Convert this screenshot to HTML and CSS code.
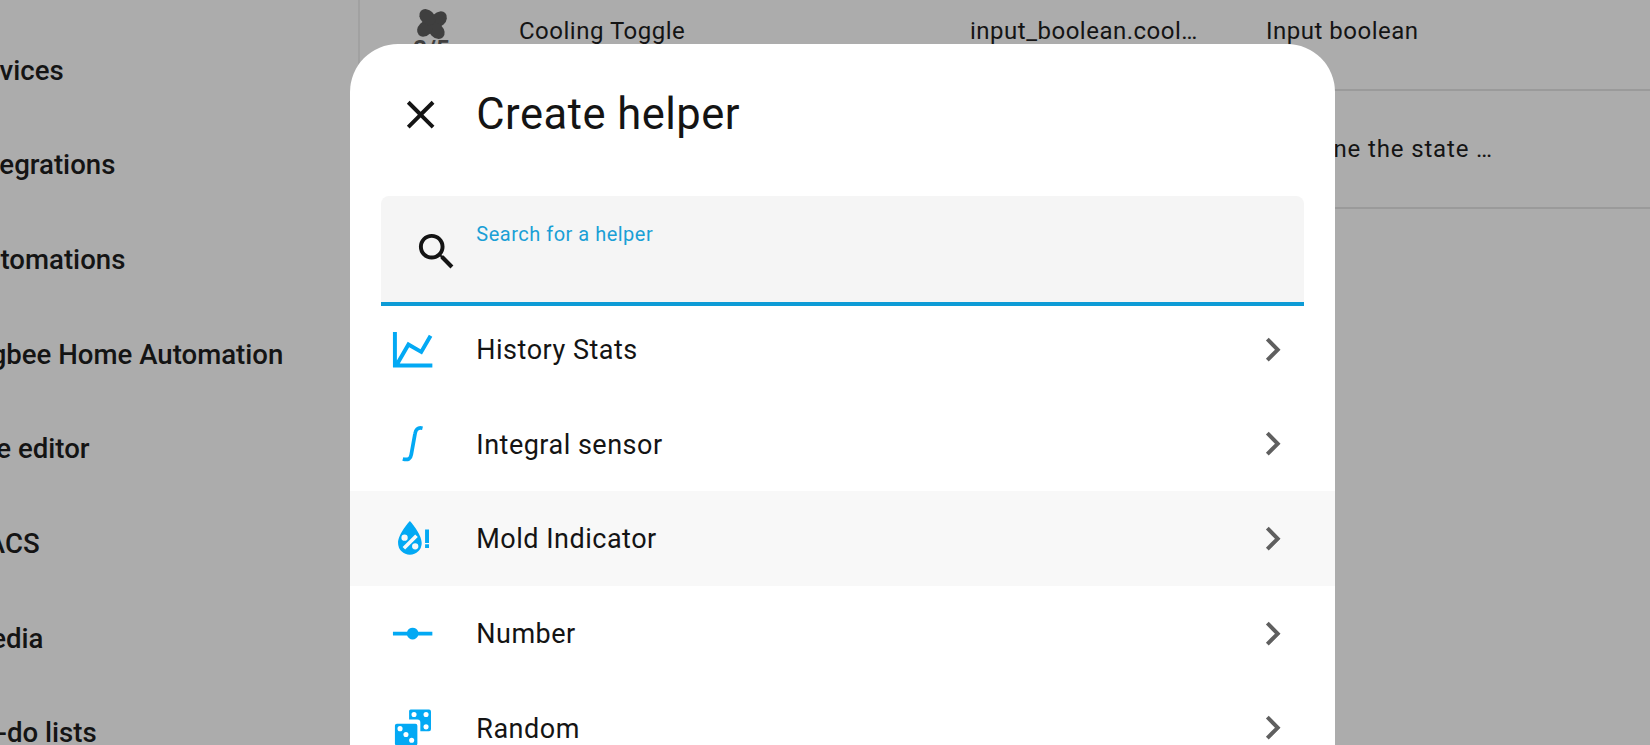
FILE: index.html
```html
<!DOCTYPE html>
<html lang="en">
<head>
  <meta charset="UTF-8" />
  <title>Helpers</title>
  <link rel="stylesheet" href="styles.css">
</head>
<body>
  <div class="page">
    <nav class="sidebar">
      <div class="side-item">Devices</div>
      <div class="side-item">Integrations</div>
      <div class="side-item">Automations</div>
      <div class="side-item">Zigbee Home Automation</div>
      <div class="side-item">File editor</div>
      <div class="side-item">HACS</div>
      <div class="side-item">Media</div>
      <div class="side-item">To-do lists</div>
    </nav>
    <main class="table">
      <div class="row">
        <div class="cell-icon">
          <svg class="fan" viewBox="0 0 24 24">
            <ellipse cx="13" cy="6.9" rx="4.4" ry="5.7" transform="rotate(45 12 12)"/>
            <ellipse cx="13" cy="6.9" rx="4.4" ry="5.7" transform="rotate(135 12 12)"/>
            <ellipse cx="13" cy="6.9" rx="4.4" ry="5.7" transform="rotate(225 12 12)"/>
            <ellipse cx="13" cy="6.9" rx="4.4" ry="5.7" transform="rotate(315 12 12)"/>
          </svg>
          <span class="fan-state">2/5</span>
        </div>
        <div class="cell-name">Cooling Toggle</div>
        <div class="cell-id">input_boolean.cool…</div>
        <div class="cell-type">Input boolean</div>
      </div>
      <div class="row">
        <div class="cell-icon"></div>
        <div class="cell-name"></div>
        <div class="cell-id"></div>
        <div class="cell-type cell-desc">Determine the state …</div>
      </div>
    </main>
  </div>

  <section class="dialog">
    <header class="dialog-head">
      <svg class="icon icon-close" viewBox="0 0 24 24"><path d="M19,6.41L17.59,5L12,10.59L6.41,5L5,6.41L10.59,12L5,17.59L6.41,19L12,13.41L17.59,19L19,17.59L13.41,12L19,6.41Z"/></svg>
      <h1 class="dialog-title">Create helper</h1>
    </header>
    <div class="search">
      <svg class="icon icon-search" viewBox="0 0 24 24"><path d="M9.5,3A6.5,6.5 0 0,1 16,9.5C16,11.11 15.41,12.59 14.44,13.73L14.71,14H15.5L20.5,19L19,20.5L14,15.5V14.71L13.73,14.44C12.59,15.41 11.11,16 9.5,16A6.5,6.5 0 0,1 3,9.5A6.5,6.5 0 0,1 9.5,3M9.5,5C7,5 5,7 5,9.5C5,12 7,14 9.5,14C12,14 14,12 14,9.5C14,7 12,5 9.5,5Z"/></svg>
      <label class="search-label">Search for a helper</label>
    </div>
    <ul class="list">
      <li class="item">
        <svg class="icon item-icon" viewBox="0 0 24 24"><path d="M16,11.78L20.24,4.45L21.97,5.45L16.74,14.5L10.23,10.75L5.46,19H22V21H2V3H4V17.54L9.5,8L16,11.78Z"/></svg>
        <span class="item-text">History Stats</span>
        <svg class="icon chevron" viewBox="0 0 24 24"><path d="M8.59,16.58L13.17,12L8.59,7.41L10,6L16,12L10,18L8.59,16.58Z"/></svg>
      </li>
      <li class="item">
        <svg class="icon item-icon" viewBox="0 0 24 24"><path class="integral" d="M17,4.2C14.5,3.6 13.5,5 13.2,7L11.3,17.5C11,19.6 9.8,20.5 7,19.8"/></svg>
        <span class="item-text">Integral sensor</span>
        <svg class="icon chevron" viewBox="0 0 24 24"><path d="M8.59,16.58L13.17,12L8.59,7.41L10,6L16,12L10,18L8.59,16.58Z"/></svg>
      </li>
      <li class="item item-hover">
        <svg class="icon item-icon" viewBox="0 0 24 24">
          <path fill-rule="evenodd" d="M10.6,3C10.6,3 16.6,9.4 16.6,14.2A6,6 0 0,1 4.6,14.2C4.6,9.4 10.6,3 10.6,3ZM13.3,9.9L14.6,11.2L8.2,17.5L6.9,16.2ZM7.9,9.9A1.6,1.6 0 1,0 7.9,13.1A1.6,1.6 0 1,0 7.9,9.9ZM13.3,14.3A1.6,1.6 0 1,0 13.3,17.5A1.6,1.6 0 1,0 13.3,14.3Z"/>
          <path d="M18.3,7.4H20.3V14.2H18.3ZM18.3,14.9H20.3V16.8H18.3Z"/>
        </svg>
        <span class="item-text">Mold Indicator</span>
        <svg class="icon chevron" viewBox="0 0 24 24"><path d="M8.59,16.58L13.17,12L8.59,7.41L10,6L16,12L10,18L8.59,16.58Z"/></svg>
      </li>
      <li class="item">
        <svg class="icon item-icon" viewBox="0 0 24 24"><path d="M2,11H9.17C9.58,9.83 10.69,9 12,9S14.42,9.83 14.83,11H22V13H14.83C14.42,14.17 13.31,15 12,15S9.58,14.17 9.17,13H2V11Z"/></svg>
        <span class="item-text">Number</span>
        <svg class="icon chevron" viewBox="0 0 24 24"><path d="M8.59,16.58L13.17,12L8.59,7.41L10,6L16,12L10,18L8.59,16.58Z"/></svg>
      </li>
      <li class="item">
        <svg class="icon item-icon" viewBox="0 0 24 24">
          <path fill-rule="evenodd" d="M11,2.8H20.3A1,1 0 0,1 21.3,3.8V12.8A1,1 0 0,1 20.3,13.8H15.9V9.4A1.5,1.5 0 0,0 14.4,7.9H10.2V3.6A0.8,0.8 0 0,1 11,2.8ZM12.7,4A1.3,1.3 0 1,0 12.7,6.6A1.3,1.3 0 1,0 12.7,4ZM18.8,4A1.3,1.3 0 1,0 18.8,6.6A1.3,1.3 0 1,0 18.8,4ZM18.8,10.3A1.3,1.3 0 1,0 18.8,12.9A1.3,1.3 0 1,0 18.8,10.3Z"/>
          <path fill-rule="evenodd" d="M4,10H13.4A1,1 0 0,1 14.4,11V20.2A1,1 0 0,1 13.4,21.2H4A1,1 0 0,1 3,20.2V11A1,1 0 0,1 4,10ZM5.6,11.2A1.3,1.3 0 1,0 5.6,13.8A1.3,1.3 0 1,0 5.6,11.2ZM8.6,14.2A1.3,1.3 0 1,0 8.6,16.8A1.3,1.3 0 1,0 8.6,14.2ZM11.5,17.1A1.3,1.3 0 1,0 11.5,19.7A1.3,1.3 0 1,0 11.5,17.1Z"/>
        </svg>
        <span class="item-text">Random</span>
        <svg class="icon chevron" viewBox="0 0 24 24"><path d="M8.59,16.58L13.17,12L8.59,7.41L10,6L16,12L10,18L8.59,16.58Z"/></svg>
      </li>
    </ul>
  </section>
</body>
</html>
```

FILE: styles.css
```css
:root {
  --scrim: #acacac;
  --text: #141414;
  --accent: #03a9f4;
  --primary: #1a9fd6;
  --row: 94.7px;
}

html, body {
  margin: 0;
  padding: 0;
  height: 745px;
  overflow: hidden;
  background: var(--scrim);
  font-family: Roboto, sans-serif;
  color: var(--text);
}

.page {
  display: flex;
  height: 745px;
  overflow: hidden;
}

.sidebar {
  width: 360px;
  flex: none;
  box-sizing: border-box;
  border-right: 2px solid #a1a1a1;
  padding-top: 23.5px;
  overflow: hidden;
}

.side-item {
  height: var(--row);
  line-height: var(--row);
  margin-left: -33px;
  font-size: 27.6px;
  font-weight: 500;
  white-space: nowrap;
}

.table {
  flex: 1;
  margin-top: -27px;
}

.row {
  display: flex;
  align-items: center;
  height: 118px;
  box-sizing: border-box;
  border-bottom: 2px solid #9a9a9a;
  font-size: 24px;
  letter-spacing: 0.5px;
  white-space: nowrap;
}

.cell-icon {
  width: 159px;
  flex: none;
  display: flex;
  flex-direction: column;
  align-items: center;
  padding-right: 16px;
  box-sizing: border-box;
}

.fan {
  width: 38px;
  height: 38px;
  fill: #3f3f3f;
}

.fan-state {
  margin-top: -3px;
  font-size: 24px;
  font-weight: 700;
  letter-spacing: 0;
  line-height: 18px;
  color: #3f3f3f;
}

.cell-name {
  width: 451px;
  flex: none;
}

.cell-id {
  width: 296px;
  flex: none;
}

.cell-desc {
  margin-left: -22.5px;
  letter-spacing: 0.85px;
}

.dialog {
  position: absolute;
  left: 350px;
  top: 44px;
  width: 985px;
  height: 760px;
  background: #fff;
  border-radius: 48px;
  overflow: hidden;
}

.dialog-head {
  display: flex;
  align-items: center;
  height: 142px;
  padding-left: 47px;
}

.icon {
  width: 47.3px;
  height: 47.3px;
  flex: none;
}

.dialog-title {
  margin: -2px 0 0 32px;
  font-size: 43.5px;
  font-weight: 400;
  letter-spacing: 0.5px;
}

.icon-close {
  fill: var(--text);
}

.search {
  display: flex;
  height: 110px;
  box-sizing: border-box;
  margin: 10px 31px -4px;
  padding: 32px 0 0 32px;
  background: #f5f5f5;
  border-bottom: 4px solid #0d9bd6;
  border-radius: 8px 8px 0 0;
  position: relative;
}

.icon-search {
  fill: var(--text);
}

.search-label {
  margin: -6px 0 0 16px;
  font-size: 20px;
  line-height: 24px;
  letter-spacing: 0.5px;
  color: var(--primary);
}

.list {
  list-style: none;
  margin: 0;
  padding: 0;
}

.item {
  display: flex;
  align-items: center;
  height: var(--row);
  padding: 0 39px 0 39px;
}

.item-hover {
  background: #f8f8f8;
}

.item-icon {
  fill: var(--accent);
}

.integral {
  fill: none;
  stroke: var(--accent);
  stroke-width: 1.9;
}

.item-text {
  flex: 1;
  margin-left: 40px;
  padding-top: 1px;
  font-size: 27px;
  letter-spacing: 0.5px;
}

.chevron {
  fill: #5f5f5f;
}
```
